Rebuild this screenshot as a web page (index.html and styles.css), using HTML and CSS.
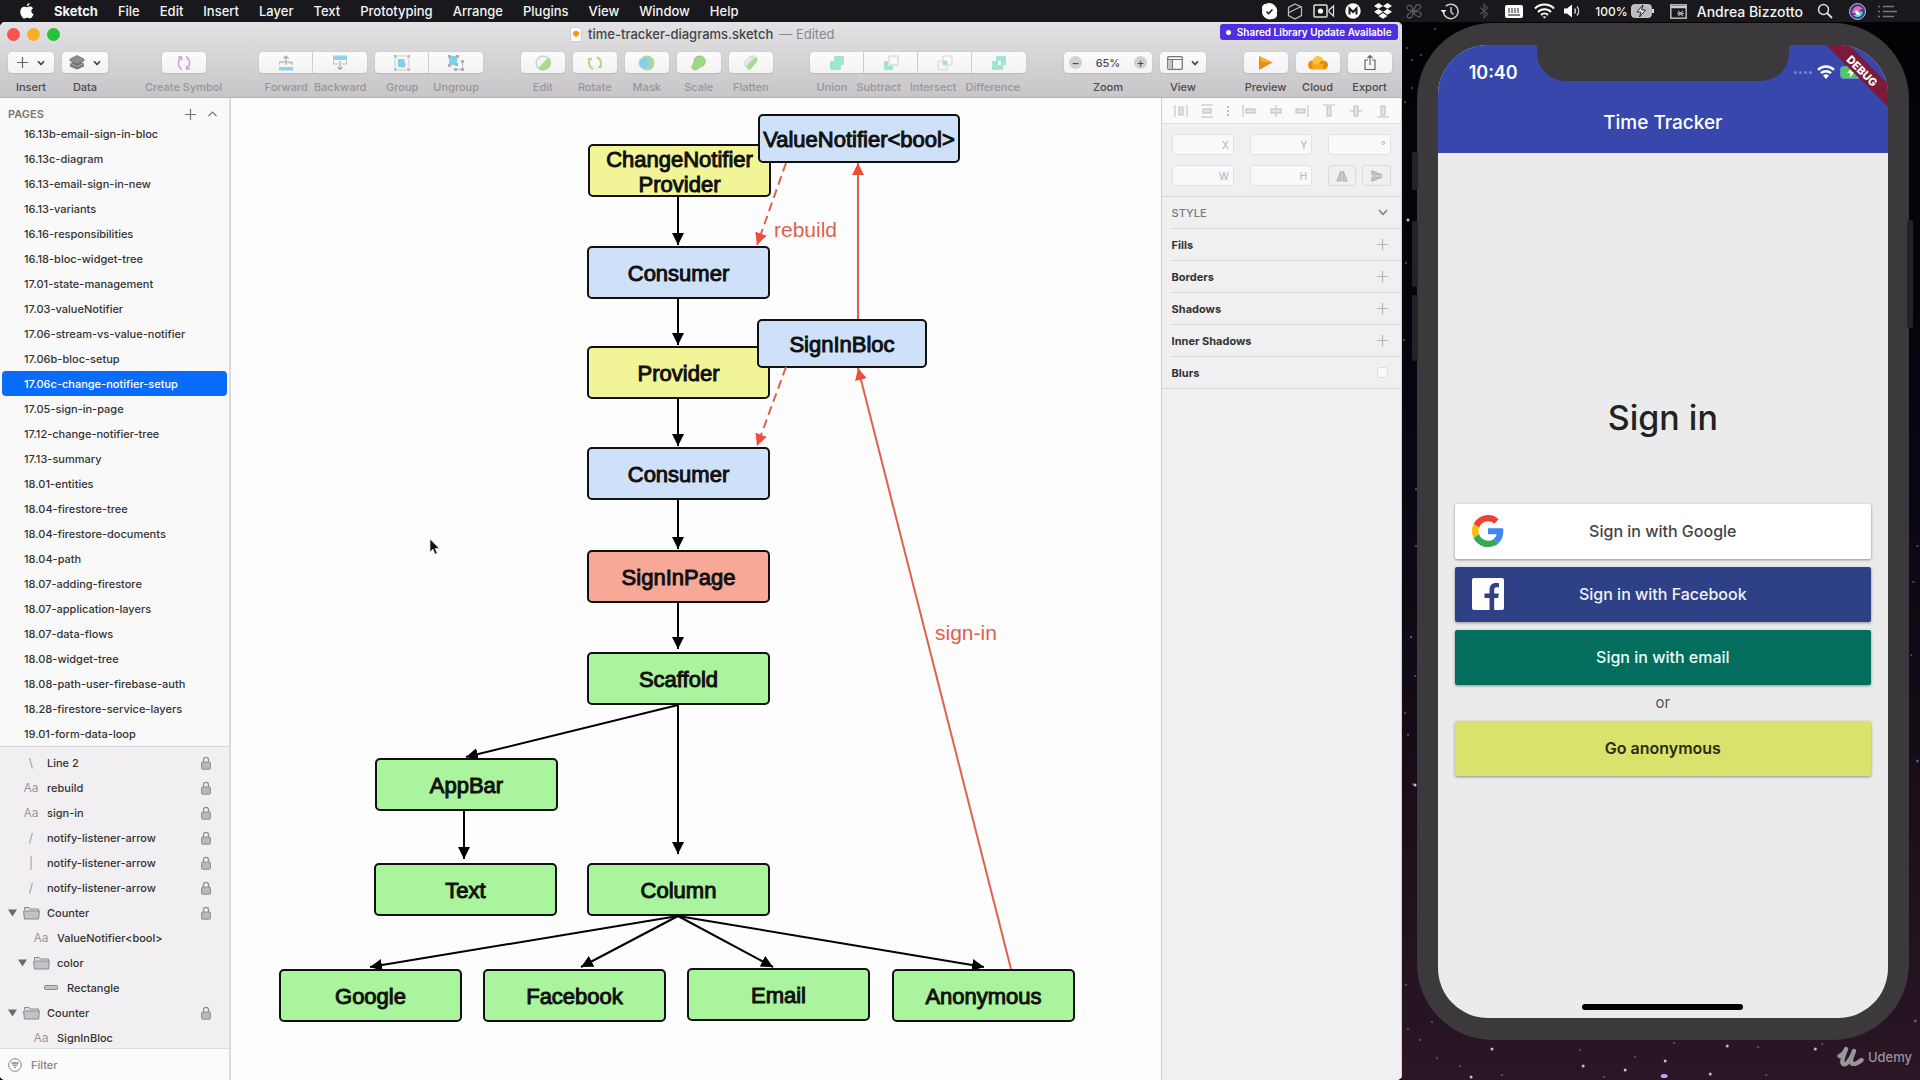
FILE: index.html
```html
<!DOCTYPE html>
<html lang="en">
<head>
<meta charset="utf-8">
<title>time-tracker-diagrams.sketch</title>
<link rel="stylesheet" href="styles.css">
</head>
<body>
<svg class="defs" aria-hidden="true">
  <symbol id="lock" viewBox="0 0 10 14"><path d="M2.5 6V3.8a2.5 2.5 0 0 1 5 0V6" fill="none" stroke="#8d8c8f" stroke-width="1.3"/><rect x=".6" y="6" width="8.8" height="7.2" rx="1" fill="#b9b8bb" stroke="#8d8c8f"/></symbol>
  <symbol id="folder" viewBox="0 0 17 14"><path d="M1.5 4V1.5h4.500l1.200 1.500h8.300V5" fill="#dddce0" stroke="#89888c"/><path d="M.6 5h15.800l-.8 8H1.400z" fill="#c3c2c6" stroke="#89888c"/></symbol>
  <symbol id="tri" viewBox="0 0 9 8"><path d="M0 .5h9L4.500 7.500z" fill="#6b6a6d"/></symbol>
  <symbol id="chev" viewBox="0 0 8 6"><path d="M1 1.200 4 4.500 7 1.200" fill="none" stroke="#444" stroke-width="1.700"/></symbol>
  <symbol id="plus" viewBox="0 0 11 11"><path d="M5.500 0v11M0 5.500h11" fill="none" stroke="currentColor" stroke-width="1.200"/></symbol>
</svg>

<header class="menubar">
  <nav class="menus">
    <button aria-label="Apple menu"><svg width="14" height="16" viewBox="0 0 14 16"><path d="M9.600 0c.1 1.500-1.200 3.100-2.700 3.200C6.700 1.700 8.100.2 9.600 0zM7.200 4.300c.8 0 1.600-.7 2.900-.7 1 0 2.200.6 2.900 1.600-2.500 1.500-2.100 4.900.6 5.900-.6 1.700-2 4.300-3.500 4.400-1.100 0-1.500-.7-2.800-.7s-1.700.7-2.700.7C2.700 15.600.3 11.900.3 8.700c0-3.100 2-4.900 3.900-4.900 1.300 0 2.200.5 3 .5z" fill="#fff"/></svg></button>
    <button class="app">Sketch</button><button>File</button><button>Edit</button><button>Insert</button><button>Layer</button><button>Text</button><button>Prototyping</button><button>Arrange</button><button>Plugins</button><button>View</button><button>Window</button><button>Help</button>
  </nav>
  <div class="status">
    <span class="slot s24"><svg width="17" height="17" viewBox="0 0 17 17"><path d="M5 .8a8 8 0 0 1 10.800 9.700A4.300 4.300 0 0 1 11 16 7.600 7.600 0 0 1 1.300 6.800 4.300 4.300 0 0 1 5 .8z" fill="#fff"/><path d="m5.500 8.500 2 2 4-4" fill="none" stroke="#222" stroke-width="1.600"/></svg></span>
    <span class="slot s28"><svg width="16" height="17" viewBox="0 0 16 17"><path d="m8 1 6.500 3v8.500L8 16l-6.500-3.500V4.500zM2 9.500l12-6" fill="none" stroke="#bbb" stroke-width="1.300"/></svg></span>
    <span class="slot"><svg width="22" height="14" viewBox="0 0 22 14"><rect x="1" y="1" width="13" height="12" rx="1" fill="none" stroke="#ddd" stroke-width="1.500"/><circle cx="7.500" cy="7" r="2.600" fill="#fff"/><path d="m16 6 4.500-4v10L16 8z" fill="none" stroke="#ddd" stroke-width="1.300"/></svg></span>
    <span class="slot s28"><svg width="16" height="16" viewBox="0 0 16 16"><circle cx="8" cy="8" r="7.700" fill="#fff"/><path d="M4.500 11.500v-6L8 9l3.500-3.500v6" fill="none" stroke="#1b1b1f" stroke-width="2"/></svg></span>
    <span class="slot s32"><svg width="18" height="16" viewBox="0 0 18 16" fill="#fff"><path d="M4.500 0 9 2.900 4.500 5.800 0 2.900zM13.500 0 18 2.900l-4.500 2.900L9 2.900zM4.500 5.900 9 8.800l-4.500 2.900L0 8.800zM13.500 5.900 18 8.800l-4.500 2.900L9 8.800zM9 10l4.500 2.900L9 15.800l-4.500-2.900z"/></svg></span>
    <span class="slot"><svg width="18" height="16" viewBox="0 0 18 16" fill="none" stroke="#59595e" stroke-width="1.300"><path d="M8 8C3 8 1 6 2.500 3.500S7 2 8 8zM9 8c0-5 3-7 5.500-6S16 7 9 8zM8 9c5-1 9 0 8 3s-5 2-8-3zM8 8.500c0 4-1.500 6.500-4 6.500S1 11 8 8.500z"/></svg></span>
    <span class="slot s40"><svg width="19" height="17" viewBox="0 0 19 17" fill="none" stroke="#ccc" stroke-width="1.500"><path d="M3.500 9A7.300 7.300 0 1 0 5.700 3.200M11 4v5l2.500 2.500"/><path d="m.5 7 3 3 3-3z" fill="#fff" stroke="none"/></svg></span>
    <span class="slot"><svg width="10" height="16" viewBox="0 0 10 16"><path d="m1 4.500 7.500 6.500L5 14.500v-13L8.500 5 1 11.500" fill="none" stroke="#4c4c51" stroke-width="1.300"/></svg></span>
    <span class="slot"><svg width="20" height="15" viewBox="0 0 20 15"><rect x="1" y="1" width="18" height="13" rx="2" fill="#fff"/><path d="M5 4v5M8 4v5M11 4v5M14 4v5M4 11h12" stroke="#555" stroke-width="1.300"/></svg></span>
    <span class="slot"><svg width="21" height="16" viewBox="0 0 21 16" fill="none" stroke="#fff" stroke-width="2"><path d="M1 5.500a13.500 13.500 0 0 1 19 0M4 9a9 9 0 0 1 13 0M7 12a5 5 0 0 1 7 0"/><path d="m8.500 13.500 2 2 2-2z" fill="#fff" stroke="none"/></svg></span>
    <span class="slot s28"><svg width="18" height="14" viewBox="0 0 18 14"><path d="M0 4.500h3L8 .5v13l-5-4H0z" fill="#fff"/><path d="M10.500 4.500a4 4 0 0 1 0 5M13 2.500a7 7 0 0 1 0 9" fill="none" stroke="#ccc" stroke-width="1.400"/></svg></span>
    <span class="battery">100%<svg width="24" height="14" viewBox="0 0 24 14"><rect x=".7" y=".7" width="19.500" height="12.600" rx="2.500" fill="#bbb" stroke="#ddd"/><path d="M22 5v4" stroke="#ddd" stroke-width="2"/><path d="M12 1 6 8h4l-1.500 5 6-7h-4z" fill="#fff" stroke="#222"/></svg></span>
    <span class="slot s32"><svg width="17" height="15" viewBox="0 0 17 15"><rect x=".8" y=".8" width="15.400" height="13.400" fill="none" stroke="#bbb" stroke-width="1.500"/><path d="M1 3h15" stroke="#ccc" stroke-width="2.500"/><path d="m8 7 5 5M13 7l-5 5M7 9.500h7" stroke="#aaa" stroke-width="1.200"/></svg></span>
    <span class="user">Andrea Bizzotto</span>
    <span class="slot s32"><svg width="16" height="16" viewBox="0 0 16 16" fill="none" stroke="#ddd"><circle cx="6.500" cy="6.500" r="5" stroke-width="1.500"/><path d="m10 10 5 5" stroke-width="2"/></svg></span>
    <span class="slot s32"><svg width="17" height="17" viewBox="0 0 17 17"><circle cx="8.500" cy="8.500" r="8" fill="#3c3f8e" stroke="#bfc3cc"/><path d="M3 10C4 3 10 1 14 6c-5 0-4 6-11 4z" fill="#ef6aa8"/><path d="M4 12c4 1 5-6 10-3-1 5-6 7-10 3z" fill="#52cfe8"/><path d="M6 8c3-2 4 2 5 4-2 1-4 0-5-4z" fill="#fff"/></svg></span>
    <span class="slot s28"><svg width="19" height="13" viewBox="0 0 19 13" stroke="#77777c" stroke-width="1.500"><path d="M0 1.500h2M5 1.500h11M0 6.500h2M5 6.500h14M0 11.500h2M5 11.500h11"/></svg></span>
  </div>
</header>

<main class="desk">
  <section class="window">
    <div class="chrome">
      <div class="titlebar">
        <div class="lights"><i class="red"></i><i class="amber"></i><i class="green"></i></div>
        <p class="title"><svg width="12" height="15" viewBox="0 0 12 15"><path d="M.5.500h8l3 3v11H.5z" fill="#fff" stroke="#ccc"/><path d="m3 5.500 1.500-1.500h3L9 5.500v2L6 10.500 3 7.500z" fill="#f39a12"/></svg><b>time-tracker-diagrams.sketch</b> — Edited</p>
        <button class="notice">Shared Library Update Available</button>
      </div>
      <div class="toolbar">
        <div class="set">
          <div class="tool on w46"><button id="t1"><svg width="11" height="11" color="#666"><use href="#plus"/></svg><svg width="8" height="6"><use href="#chev"/></svg></button><label for="t1">Insert</label></div>
          <div class="tool on w46"><button id="t2"><svg width="16" height="15" viewBox="0 0 16 15"><path d="m8 5.500 7 3v3L8 14.500l-7-3v-3z" fill="#777"/><path d="m8 .500 7 3.500v2L8 9 1 6V4z" fill="#8c8c8c" stroke="#666" stroke-width=".6"/><path d="m1 8.500 7 3 7-3" fill="none" stroke="#bbb" stroke-width=".7"/></svg><svg width="8" height="6"><use href="#chev"/></svg></button><label for="t2">Data</label></div>
        </div>
        <div class="tool w76"><button id="t3"><svg width="16" height="16" viewBox="0 0 16 16" fill="none" stroke="#d3a0de" stroke-width="1.500"><path d="M6 14.500C1.500 12 1.500 5 5 2.500M2 2h3.500v3.500M10 1.500C14.500 4 14.500 11 11 13.500M14 14h-3.500v-3.500"/></svg></button><label for="t3">Create Symbol</label></div>
        <div class="set">
          <div class="segs">
            <div class="tool seg"><button id="t4"><svg width="16" height="16" viewBox="0 0 16 16"><path d="M1.500 9.500V7h4.500M10 7h4.500v2.500zH1.500" fill="none" stroke="#b8b8b8"/><path d="M8 10V1M5.500 3.500 8 1l2.500 2.500" fill="none" stroke="#aaa" stroke-width="1.200"/><path d="M1 12h14v3.500H1z" fill="#93d0ea"/></svg></button><label for="t4">Forward</label></div>
            <div class="tool seg"><button id="t5"><svg width="16" height="16" viewBox="0 0 16 16"><path d="M1 .500h14V5H1z" fill="#93d0ea"/><path d="M1.500 6v3h4.500M10 9h4.500V6" fill="none" stroke="#b8b8b8"/><path d="M8 6v8M5.500 12 8 14.500l2.500-2.500" fill="none" stroke="#aaa" stroke-width="1.200"/></svg></button><label for="t5">Backward</label></div>
          </div>
          <div class="segs">
            <div class="tool seg"><button id="t6"><svg width="18" height="18" viewBox="0 0 18 18"><path d="M5 2h8M5 16h8M2 5v8M16 5v8" stroke="#ccc"/><path d="M5 5h6.500v8H5z" fill="#7fcdf0"/><path d="M12 8.500v4.500H8" stroke="#bbb" fill="none"/><path d="M1 1h3v3H1zM14 1h3v3h-3zM1 14h3v3H1zM14 14h3v3h-3z" fill="#c0c0c0"/></svg></button><label for="t6">Group</label></div>
            <div class="tool seg"><button id="t7"><svg width="18" height="18" viewBox="0 0 18 18"><path d="M2 2h8v9H2z" fill="#7fcdf0"/><path d="M1 1h3v3H1zM9 1h3v3H9zM1 10h3v3H1zM8 9h3v3H8zM14 6h3v3h-3zM7 14h3v3H7zM14 14h3v3h-3z" fill="#b0b0b0"/><path d="M15.500 9v5M10 15.500h4" stroke="#bbb"/></svg></button><label for="t7">Ungroup</label></div>
          </div>
        </div>
        <div class="set">
          <div class="tool w44"><button id="t8"><svg width="16" height="16" viewBox="0 0 16 16"><circle cx="8" cy="8" r="7" fill="#f4f4f4" stroke="#bbb"/><path d="M13.500 2A7.500 7.500 0 0 1 3 13.500z" fill="#aadb91"/></svg></button><label for="t8">Edit</label></div>
          <div class="tool w44"><button id="t9"><svg width="16" height="16" viewBox="0 0 16 16" fill="none" stroke="#aadb91" stroke-width="2"><path d="M6 14C1 11.500 1 6 3.500 3M10 2c5 2.500 5 8 2.500 11M1 4h4M15 12h-4"/></svg></button><label for="t9">Rotate</label></div>
          <div class="tool w44"><button id="t10"><svg width="17" height="16" viewBox="0 0 17 16"><circle cx="9" cy="8" r="7.500" fill="#aadb91"/><circle cx="6.500" cy="8" r="5.500" fill="#84d0ee" stroke="#bcc"/></svg></button><label for="t10">Mask</label></div>
          <div class="tool w44"><button id="t11"><svg width="16" height="16" viewBox="0 0 16 16"><path d="M9 1a5.500 5.500 0 0 1 4 9c-2 2-4 1-6 4-2 2-6 1-6-2 0-2 2-3 2-6a6 6 0 0 1 6-5z" fill="#9fd987" stroke="#92cf78"/></svg></button><label for="t11">Scale</label></div>
          <div class="tool w44"><button id="t12"><svg width="16" height="16" viewBox="0 0 16 16"><path d="M2 10c-1-4 5-10 9-9L3 12z" fill="#eee" stroke="#ccc"/><path d="m4 11 8-9c2 0 3 2 2.500 4L8 14c-2 2-5 0-4-3z" fill="#aadb91"/></svg></button><label for="t12">Flatten</label></div>
        </div>
        <div class="packed">
          <div class="segs">
            <div class="tool seg"><button id="t13"><svg width="16" height="16" viewBox="0 0 16 16"><path d="M5 2q0-1 1-1h8q1 0 1 1v7q0 1-1 1h-2v4q0 1-1 1H2q-1 0-1-1V7q0-1 1-1h3z" fill="#a0e4d4"/></svg></button></div>
            <div class="tool seg"><button id="t14"><svg width="16" height="16" viewBox="0 0 16 16"><rect x="6" y="1" width="9" height="9" rx="1" fill="none" stroke="#ccc"/><path d="M2 6h3v5h5v3q0 1-1 1H2q-1 0-1-1V7q0-1 1-1z" fill="#a0e4d4"/></svg></button></div>
            <div class="tool seg"><button id="t15"><svg width="16" height="16" viewBox="0 0 16 16"><g fill="none" stroke="#d5d5d5"><rect x="6" y="1" width="9" height="9" rx="1"/><rect x="1" y="6" width="9" height="9" rx="1"/></g><path d="M6 6h4v4H6z" fill="#9edfce"/></svg></button></div>
            <div class="tool seg"><button id="t16"><svg width="16" height="16" viewBox="0 0 16 16"><path d="M5 2q0-1 1-1h8q1 0 1 1v7q0 1-1 1h-2v4q0 1-1 1H2q-1 0-1-1V7q0-1 1-1h3z" fill="#a0e4d4"/><path d="M7 6h3v4H7z" fill="#f8fffd"/></svg></button></div>
          </div>
          <div class="captions"><label for="t13">Union</label><label for="t14">Subtract</label><label for="t15">Intersect</label><label for="t16">Difference</label></div>
        </div>
        <div class="set">
          <div class="tool on w88"><div class="stepper"><button aria-label="Zoom out">−</button><span>65%</span><button aria-label="Zoom in">+</button></div><span class="cap">Zoom</span></div>
          <div class="tool on w46"><button id="t17"><svg width="16" height="14" viewBox="0 0 16 14" fill="none" stroke="#777"><rect x=".7" y=".7" width="14.600" height="12.600" rx="1" stroke-width="1.300"/><path d="M1 3.500h14M5.500 3.500V13" /><path d="M1.500 4h3.500v9H1.500z" fill="#c5c5c5" stroke="none"/></svg><svg width="8" height="6"><use href="#chev"/></svg></button><label for="t17">View</label></div>
        </div>
        <div class="set">
          <div class="tool on w44"><button id="t18"><svg width="15" height="14" viewBox="0 0 15 14"><path d="m1 0 13.500 6.500L1 14z" fill="#ed8b18"/><path d="m1 0 13.500 6.500L4 6z" fill="#f9ad33"/></svg></button><label for="t18">Preview</label></div>
          <div class="tool on w44"><button id="t19"><svg width="20" height="14" viewBox="0 0 20 14"><circle cx="4.500" cy="9" r="4.500" fill="#e98a10"/><circle cx="10" cy="5.500" r="5.500" fill="#fbc43b"/><circle cx="15.500" cy="9" r="4.500" fill="#e98a10"/><path d="M4.500 8h11v5.500h-11z" fill="#f5a91e"/></svg></button><label for="t19">Cloud</label></div>
          <div class="tool on w44"><button id="t20"><svg width="12" height="17" viewBox="0 0 12 17" fill="none" stroke="#666" stroke-width="1.200"><path d="M4 6H1v9.500h10V6H8M6 11V1.500M3.500 4 6 1.500 8.500 4"/></svg></button><label for="t20">Export</label></div>
        </div>
      </div>
    </div>

    <div class="work">
      <aside class="sidebar">
        <div class="pages-head"><h2>PAGES</h2><button aria-label="Add page"><svg width="11" height="11"><use href="#plus"/></svg></button><button aria-label="Collapse pages"><svg width="9" height="6" viewBox="0 0 9 6"><path d="m.5 5 4-4 4 4" fill="none" stroke="#777" stroke-width="1.200"/></svg></button></div>
        <ul class="pages">
          <li><button>16.13b-email-sign-in-bloc</button></li><li><button>16.13c-diagram</button></li><li><button>16.13-email-sign-in-new</button></li><li><button>16.13-variants</button></li><li><button>16.16-responsibilities</button></li><li><button>16.18-bloc-widget-tree</button></li><li><button>17.01-state-management</button></li><li><button>17.03-valueNotifier</button></li><li><button>17.06-stream-vs-value-notifier</button></li><li><button>17.06b-bloc-setup</button></li><li class="current"><button>17.06c-change-notifier-setup</button></li><li><button>17.05-sign-in-page</button></li><li><button>17.12-change-notifier-tree</button></li><li><button>17.13-summary</button></li><li><button>18.01-entities</button></li><li><button>18.04-firestore-tree</button></li><li><button>18.04-firestore-documents</button></li><li><button>18.04-path</button></li><li><button>18.07-adding-firestore</button></li><li><button>18.07-application-layers</button></li><li><button>18.07-data-flows</button></li><li><button>18.08-widget-tree</button></li><li><button>18.08-path-user-firebase-auth</button></li><li><button>18.28-firestore-service-layers</button></li><li><button>19.01-form-data-loop</button></li>
        </ul>
        <ul class="layers">
          <li><i></i><span class="kind">\</span><span>Line 2</span><svg class="lock"><use href="#lock"/></svg></li>
          <li><i></i><span class="kind">Aa</span><span>rebuild</span><svg class="lock"><use href="#lock"/></svg></li>
          <li><i></i><span class="kind">Aa</span><span>sign-in</span><svg class="lock"><use href="#lock"/></svg></li>
          <li><i></i><span class="kind">/</span><span>notify-listener-arrow</span><svg class="lock"><use href="#lock"/></svg></li>
          <li><i></i><span class="kind">|</span><span>notify-listener-arrow</span><svg class="lock"><use href="#lock"/></svg></li>
          <li><i></i><span class="kind">/</span><span>notify-listener-arrow</span><svg class="lock"><use href="#lock"/></svg></li>
          <li><i><svg width="9" height="8"><use href="#tri"/></svg></i><span class="kind"><svg width="17" height="14"><use href="#folder"/></svg></span><span>Counter</span><svg class="lock"><use href="#lock"/></svg></li>
          <li class="in1"><i></i><span class="kind">Aa</span><span>ValueNotifier&lt;bool&gt;</span></li>
          <li class="in1"><i><svg width="9" height="8"><use href="#tri"/></svg></i><span class="kind"><svg width="17" height="14"><use href="#folder"/></svg></span><span>color</span></li>
          <li class="in2"><i></i><span class="kind"><svg width="14" height="5"><rect x=".5" y=".5" width="13" height="4" rx="1" fill="#c3c2c6" stroke="#89888c"/></svg></span><span>Rectangle</span></li>
          <li><i><svg width="9" height="8"><use href="#tri"/></svg></i><span class="kind"><svg width="17" height="14"><use href="#folder"/></svg></span><span>Counter</span><svg class="lock"><use href="#lock"/></svg></li>
          <li class="in1"><i></i><span class="kind">Aa</span><span>SignInBloc</span></li>
        </ul>
        <label class="filter"><svg width="14" height="14" viewBox="0 0 14 14" fill="none" stroke="#858488"><circle cx="7" cy="7" r="6.300"/><path d="M3.500 5h7M4.500 7.200h5M6 9.400h2" stroke-width="1.300"/></svg><input type="text" placeholder="Filter" aria-label="Filter layers"></label>
      </aside>

      <div class="canvas">
        <div class="board">
          <div class="node yellow n-cnp">ChangeNotifier<br>Provider</div>
          <div class="node blue n-con1">Consumer</div>
          <div class="node yellow n-prov">Provider</div>
          <div class="node blue n-con2">Consumer</div>
          <div class="node coral n-page">SignInPage</div>
          <div class="node green n-scaf">Scaffold</div>
          <div class="node green n-bar">AppBar</div>
          <div class="node green n-text">Text</div>
          <div class="node green n-col">Column</div>
          <div class="node green n-goo">Google</div>
          <div class="node green n-fb">Facebook</div>
          <div class="node green n-mail">Email</div>
          <div class="node green n-anon">Anonymous</div>
          <div class="node blue n-value">ValueNotifier&lt;bool&gt;</div>
          <div class="node blue n-bloc">SignInBloc</div>
          <svg class="wires" viewBox="231 98 930 982">
            <defs>
              <marker id="ab" viewBox="0 0 12 12" refX="12" refY="6" markerWidth="12" markerHeight="12" markerUnits="userSpaceOnUse" orient="auto"><path d="M0 0 12 6 0 12z"/></marker>
              <marker id="ar" viewBox="0 0 12 12" refX="12" refY="6" markerWidth="12" markerHeight="12" markerUnits="userSpaceOnUse" orient="auto"><path d="M0 0 12 6 0 12z" fill="#e8503c"/></marker>
            </defs>
            <g stroke="#000" stroke-width="2" fill="none">
              <path d="M678 197V245" marker-end="url(#ab)"/><path d="M678 298V345" marker-end="url(#ab)"/><path d="M678 398V446" marker-end="url(#ab)"/><path d="M678 499V549" marker-end="url(#ab)"/><path d="M678 602V649" marker-end="url(#ab)"/>
              <path d="M678 705 466 757" marker-end="url(#ab)"/><path d="M678 705V854" marker-end="url(#ab)"/><path d="M464 811V859" marker-end="url(#ab)"/>
              <path d="M678 916 370 967" marker-end="url(#ab)"/><path d="M678 916 581 967" marker-end="url(#ab)"/><path d="M678 916 773 967" marker-end="url(#ab)"/><path d="M678 916 984 967" marker-end="url(#ab)"/>
            </g>
            <g stroke="#e0604e" stroke-width="2" fill="none">
              <path d="M858 319V163" marker-end="url(#ar)"/><path d="M1011 969 858 368" marker-end="url(#ar)"/>
              <path d="M786 163 757 245" stroke-dasharray="9 5" marker-end="url(#ar)"/><path d="M786 367 757 446" stroke-dasharray="9 5" marker-end="url(#ar)"/>
            </g>
          </svg>
          <span class="note note-rebuild">rebuild</span>
          <span class="note note-sign">sign-in</span>
          <svg class="cursor" width="11" height="18" viewBox="0 0 11 18"><path d="M1 1v13l3-2.800 2 5 2.200-.9-2-4.800h4z" fill="#111" stroke="#ddd" stroke-width=".8"/></svg>
        </div>
      </div>

      <aside class="inspector">
        <div class="aligns">
          <svg viewBox="0 0 14 14"><path d="M1 1v12M13 1v12"/><rect x="5" y="3" width="4" height="8"/></svg>
          <svg viewBox="0 0 14 14"><path d="M1 1h12M1 13h12"/><rect x="3" y="5" width="8" height="4"/></svg>
          <svg class="divider" viewBox="6 0 2 14"><path d="M7 2v11" stroke-width="2" stroke-dasharray="2 2"/></svg>
          <svg viewBox="0 0 14 14"><path d="M1 1v12"/><rect x="4" y="5" width="9" height="4"/></svg>
          <svg viewBox="0 0 14 14"><path d="M7 1v12"/><rect x="2" y="5" width="10" height="4"/></svg>
          <svg viewBox="0 0 14 14"><path d="M13 1v12"/><rect x="1" y="5" width="9" height="4"/></svg>
          <svg viewBox="0 0 14 14"><path d="M1 1h12"/><rect x="5" y="3" width="4" height="9"/></svg>
          <svg viewBox="0 0 14 14"><path d="M1 7h12"/><rect x="5" y="2" width="4" height="10"/></svg>
          <svg viewBox="0 0 14 14"><path d="M1 13h12"/><rect x="5" y="2" width="4" height="9"/></svg>
        </div>
        <div class="fields">
          <label><input type="text">X</label><label><input type="text">Y</label><label><input type="text">°</label>
          <label><input type="text">W</label><label><input type="text">H</label>
          <div class="flips"><button aria-label="Flip horizontally"><svg width="12" height="12" viewBox="0 0 12 12" fill="#ccc" stroke="#aaa"><path d="M5 1v10H.8zM7 1v10h4.200z"/></svg></button><button aria-label="Flip vertically"><svg width="12" height="12" viewBox="0 0 12 12" fill="#ccc" stroke="#aaa"><path d="M1 .8V5h10zM1 11.200V7h10z"/></svg></button></div>
        </div>
        <h2 class="style-head">STYLE<svg width="10" height="7" viewBox="0 0 10 7"><path d="m1 1 4 4.500L9 1" fill="none" stroke="#777" stroke-width="1.300"/></svg></h2>
        <ul class="style-rows">
          <li>Fills<button aria-label="Add fill"><svg width="11" height="11"><use href="#plus"/></svg></button></li>
          <li>Borders<button aria-label="Add border"><svg width="11" height="11"><use href="#plus"/></svg></button></li>
          <li>Shadows<button aria-label="Add shadow"><svg width="11" height="11"><use href="#plus"/></svg></button></li>
          <li>Inner Shadows<button aria-label="Add inner shadow"><svg width="11" height="11"><use href="#plus"/></svg></button></li>
          <li><label for="blur">Blurs</label><input type="checkbox" id="blur"></li>
        </ul>
      </aside>
    </div>
  </section>

  <section class="stage">
    <svg class="stars" viewBox="1402 22 518 1058" preserveAspectRatio="none" fill="#8d87b5">
      <g opacity=".6"><circle cx="1407" cy="48" r="1"/><circle cx="1412" cy="60" r="1"/><circle cx="1435" cy="29" r="1"/><circle cx="1421" cy="55" r="1"/><circle cx="1412" cy="88" r="1"/><circle cx="1405" cy="102" r="1"/><circle cx="1406" cy="263" r="1"/><circle cx="1404" cy="340" r="1"/><circle cx="1416" cy="489" r="1"/><circle cx="1416" cy="546" r="1"/><circle cx="1411" cy="637" r="1.200"/><circle cx="1415" cy="676" r="1"/><circle cx="1405" cy="713" r="1"/><circle cx="1408" cy="735" r="1"/><circle cx="1413" cy="784" r="1"/><circle cx="1406" cy="985" r="1"/><circle cx="1917" cy="546" r="1"/><circle cx="1913" cy="582" r="1"/><circle cx="1911" cy="655" r="1"/><circle cx="1915" cy="1021" r="1.500"/><circle cx="1917" cy="761" r="1.500"/><circle cx="1432" cy="1022" r="1"/><circle cx="1408" cy="1029" r="1"/><circle cx="1420" cy="1040" r="1"/><circle cx="1437" cy="1058" r="1"/><circle cx="1460" cy="1066" r="1"/><circle cx="1502" cy="1075" r="1"/><circle cx="1580" cy="1050" r="1"/><circle cx="1604" cy="1077" r="1"/><circle cx="1635" cy="1057" r="1"/><circle cx="1674" cy="1043" r="1"/><circle cx="1758" cy="1047" r="1"/><circle cx="1766" cy="1075" r="1"/><circle cx="1822" cy="1044" r="1"/></g>
      <g fill="#c3bce0"><circle cx="1408" cy="220" r="1.500"/><circle cx="1492" cy="1049" r="1.500"/><circle cx="1583" cy="1066" r="1.500"/><circle cx="1625" cy="1070" r="1.500"/><circle cx="1665" cy="1061" r="1.500"/><circle cx="1727" cy="1046" r="1.500"/><circle cx="1710" cy="1074" r="1.500"/><circle cx="1815" cy="1049" r="1.500"/><circle cx="1471" cy="1077" r="1.500"/><circle cx="1415" cy="785" r="1.500"/></g>
      <ellipse cx="1664" cy="1076" rx="3.500" ry="2" fill="#b9a6ff"/>
    </svg>
    <div class="phone">
      <i class="key key-mute"></i><i class="key key-up"></i><i class="key key-down"></i><i class="key key-power"></i>
      <div class="screen">
        <div class="appbar">
          <div class="ios-status"><time>10:40</time><div class="notch"></div>
            <div class="signals"><span class="dots"><i></i><i></i><i></i><i></i></span><svg width="18" height="14" viewBox="0 0 18 14" fill="none" stroke="#fff" stroke-width="2.400"><path d="M1 4.800a11.500 11.500 0 0 1 16 0M4 8.200a7.200 7.200 0 0 1 10 0"/><path d="M6 10.500a4.500 4.500 0 0 1 6 0L9 14z" fill="#fff" stroke="none"/></svg><svg width="25" height="13" viewBox="0 0 25 13"><rect x=".5" y=".5" width="21" height="12" rx="3" fill="#3fd158" stroke="#7c86c8"/><path d="M12.500 1 7 7.300h3.500L9.500 12 15 5.800h-3.500z" fill="#fff"/></svg></div>
          </div>
          <h1>Time Tracker</h1>
          <svg class="ribbon" width="66" height="66" viewBox="0 0 66 66"><path d="M4 0h23l39 39v23z" fill="#7b1a3a"/><text x="40" y="30" transform="rotate(45 40 26)" text-anchor="middle">DEBUG</text></svg>
        </div>
        <div class="signin">
          <h2>Sign in</h2>
          <button class="cta google"><svg width="32" height="32" viewBox="0 0 48 48"><path fill="#EA4335" d="M24 9.500c3.540 0 6.710 1.220 9.210 3.600l6.850-6.850C35.900 2.380 30.470 0 24 0 14.620 0 6.510 5.380 2.560 13.220l7.980 6.190C12.430 13.720 17.740 9.500 24 9.500z"/><path fill="#4285F4" d="M46.980 24.550c0-1.570-.15-3.090-.38-4.550H24v9.020h12.940c-.58 2.960-2.260 5.480-4.780 7.180l7.730 6c4.510-4.180 7.090-10.360 7.090-17.650z"/><path fill="#FBBC05" d="M10.530 28.590c-.48-1.450-.76-2.990-.76-4.590s.27-3.140.76-4.590l-7.980-6.190C.92 16.460 0 20.120 0 24c0 3.880.92 7.540 2.560 10.780l7.970-6.190z"/><path fill="#34A853" d="M24 48c6.480 0 11.930-2.130 15.890-5.810l-7.730-6c-2.150 1.450-4.920 2.300-8.160 2.300-6.260 0-11.570-4.220-13.470-9.910l-7.980 6.190C6.510 42.620 14.620 48 24 48z"/></svg><span>Sign in with Google</span></button>
          <button class="cta facebook"><svg width="32" height="32" viewBox="0 0 32 32"><rect width="32" height="32" rx="2" fill="#fff"/><path d="M17.500 32V20h-5v-4.500h5v-3.800C17.500 7.500 20 5 24 5c1.500 0 2.600.1 3 .2v4h-2.300c-2 0-2.500 1-2.500 2.600v3.700h4.600l-.7 4.500h-3.900v12z" fill="#2e4186"/></svg><span>Sign in with Facebook</span></button>
          <button class="cta email"><span>Sign in with email</span></button>
          <p>or</p>
          <button class="cta anon"><span>Go anonymous</span></button>
        </div>
        <div class="home"></div>
      </div>
    </div>
    <div class="brand"><svg width="27" height="22" viewBox="0 0 27 22" fill="none" stroke="#9a949b" stroke-linecap="round" stroke-linejoin="round" stroke-width="4.400"><path d="M2.500 10C5 9 7.500 6.500 9 3 7 8 4.500 14 5.500 17c1.500 4 7-1 10-8.500L17 5c-2 5-4 11-2 12.500 2 1 6-.5 9.500-3.500"/></svg>Udemy</div>
  </section>
</main>
</body>
</html>
```
FILE: styles.css
```css
* { box-sizing: border-box; }
body {
  margin: 0;
  height: 100vh;
  display: flex;
  flex-direction: column;
  overflow: hidden;
  background: #000;
  font-family: Inter, "Liberation Sans", sans-serif;
  font-size: 11px;
  color: #333;
}
button, input { font: inherit; color: inherit; border: 0; margin: 0; padding: 0; background: none; }
ul { list-style: none; margin: 0; padding: 0; }
h1, h2, p { margin: 0; }
svg { display: block; flex: none; }
.defs { position: absolute; width: 0; height: 0; }

/* menu bar */
.menubar {
  flex: none;
  height: 22px;
  display: flex;
  justify-content: space-between;
  align-items: center;
  padding: 0 19px 0 20px;
  background: #19191d;
  color: #f4f4f4;
  font-size: 13px;
  font-weight: 500;
  white-space: nowrap;
}
.menus { display: flex; align-items: center; gap: 20px; }
.menus .app { font-weight: 700; }
.status { display: flex; align-items: center; }
.slot { width: 30px; display: flex; justify-content: center; }
.s24 { width: 24px; }
.s28 { width: 28px; }
.s32 { width: 32px; }
.s40 { width: 40px; }
.battery { display: flex; align-items: center; gap: 3px; margin: 0 8px; font-size: 12px; }
.user { margin: 0 6px 0 2px; font-size: 14px; font-weight: 500; }

.desk { flex: 1; min-height: 0; display: grid; grid-template-columns: 73fr 27fr; }

/* window */
.window {
  display: flex;
  flex-direction: column;
  min-width: 0;
  min-height: 0;
  border-radius: 5px;
  overflow: hidden;
  background: #fdfdfd;
}
.chrome {
  flex: none;
  height: 76px;
  background: linear-gradient(#e2e1e3, #c7c5c8);
  border-bottom: 1px solid #b3b1b5;
}
.titlebar {
  display: grid;
  grid-template-columns: 1fr auto 1fr;
  align-items: center;
  height: 24px;
  padding: 0 4px 0 7px;
}
.lights { display: flex; gap: 7px; }
.lights i { width: 13px; height: 13px; border-radius: 50%; }
.red { background: #f9524d; }
.amber { background: #fbae27; }
.green { background: #27c138; }
.title { display: flex; align-items: center; gap: 6px; font-size: 13px; color: #8b898d; white-space: nowrap; }
.title b { font-weight: 500; color: #444; }
.notice {
  justify-self: end;
  align-self: start;
  margin-top: 2px;
  height: 16px;
  padding: 0 6px;
  border-radius: 3px;
  background: #4f2de0;
  color: #fff;
  font-size: 10px;
  font-weight: 600;
}
.notice::before { content: ""; display: inline-block; width: 5px; height: 5px; margin: 0 6px 1px 0; border-radius: 50%; background: #fff; }
.toolbar {
  display: flex;
  justify-content: space-between;
  align-items: flex-start;
  padding: 6px 10px 0 8px;
}
.set { display: flex; gap: 8px; }
.segs { display: flex; }
.tool {
  display: flex;
  flex-direction: column;
  align-items: center;
  gap: 7px;
  color: #98969a;
  font-weight: 500;
  line-height: 14px;
}
.tool.on { color: #4b4a4d; }
.tool > button, .stepper {
  width: 100%;
  height: 21px;
  display: flex;
  align-items: center;
  justify-content: space-evenly;
  border-radius: 4px;
  background: linear-gradient(#fbfbfb, #f3f3f4);
  box-shadow: 0 0 1px #8888, 0 1px 1px #aaa6;
}
.tool label, .cap { white-space: nowrap; margin: 0 -8px; }
.w44 { width: 44px; }
.w46 { width: 46px; }
.w76 { width: 76px; }
.w76 > button { width: 44px; }
.w88 { width: 88px; }
.seg { width: 54px; }
.seg > button { border-radius: 0; border-right: 1px solid #d8d8d8; }
.seg:first-child > button { border-radius: 4px 0 0 4px; }
.seg:last-child > button { border-radius: 0 4px 4px 0; border-right: 0; }
.captions { display: flex; justify-content: center; gap: 9px; margin-top: 7px; color: #98969a; font-weight: 500; line-height: 14px; }
.stepper { justify-content: space-between; padding: 0 5px; }
.stepper button { width: 13px; height: 13px; border-radius: 50%; background: #d2d1d3; font-size: 12px; line-height: 12px; }

.work { flex: 1; min-height: 0; display: grid; grid-template-columns: 231px 1fr 241px; }

/* sidebar */
.sidebar {
  display: flex;
  flex-direction: column;
  min-height: 0;
  border-right: 2px solid #dad9dc;
  background: #f9f9f9;
  font-weight: 500;
}
.pages-head { display: flex; align-items: center; gap: 12px; height: 23px; flex: none; padding: 9px 12px 0 8px; color: #777; }
.pages-head h2 { flex: 1; font-size: 11px; font-weight: 600; }
.pages { flex: none; padding: 0 2px; border-bottom: 1px solid #d4d3d6; }
.pages li { height: 25px; display: flex; border-radius: 4px; }
.pages button { flex: 1; text-align: left; padding-left: 22px; }
.pages .current { background: #0a6cfb; color: #fff; }
.layers { flex: 1; min-height: 0; overflow: hidden; padding: 3px 18px 0 8px; background: #f1eff2; }
.layers li { display: flex; align-items: center; height: 25px; }
.layers .in1 { padding-left: 10px; }
.layers .in2 { padding-left: 20px; }
.layers i { width: 10px; }
.kind { width: 26px; margin-right: 3px; display: flex; justify-content: center; color: #99989b; font-weight: 400; font-size: 12px; }
.lock { width: 10px; height: 14px; margin-left: auto; }
.filter { flex: none; display: flex; align-items: center; gap: 9px; height: 32px; padding-left: 8px; border-top: 1px solid #dddcdf; background: #fbfbfb; }
.filter input { flex: 1; min-width: 0; }
.filter input::placeholder { color: #858488; opacity: 1; }

/* canvas */
.canvas { position: relative; overflow: hidden; background: #fdfdfd; }
.board { position: absolute; inset: 0; font-family: "Liberation Sans", Arial, sans-serif; }
.node {
  position: absolute;
  width: 183px;
  height: 53px;
  display: flex;
  align-items: center;
  justify-content: center;
  padding-top: 2px;
  text-align: center;
  border: 2px solid #111;
  border-radius: 5px;
  font-size: 22px;
  -webkit-text-stroke: 1px #111;
  line-height: 25px;
  color: #111;
  white-space: nowrap;
}
.yellow { background: #f2f597; }
.blue { background: #cfe1f9; }
.coral { background: #f7a896; }
.green.node { background: #a9f49c; }
.n-cnp { left: 357px; top: 46px; }
.n-con1 { left: 356px; top: 148px; }
.n-prov { left: 356px; top: 248px; }
.n-con2 { left: 356px; top: 349px; }
.n-page { left: 356px; top: 452px; }
.n-scaf { left: 356px; top: 554px; }
.n-bar { left: 144px; top: 660px; }
.n-text { left: 143px; top: 765px; }
.n-col { left: 356px; top: 765px; }
.n-goo { left: 48px; top: 871px; }
.n-fb { left: 252px; top: 871px; }
.n-mail { left: 456px; top: 870px; }
.n-anon { left: 661px; top: 871px; }
.n-value { left: 527px; top: 16px; width: 202px; height: 49px; }
.n-bloc { left: 526px; top: 221px; width: 170px; height: 49px; }
.wires { position: absolute; left: 0; top: 0; width: 930px; height: 982px; }
.note { position: absolute; font-size: 21px; line-height: 24px; color: #e0604e; }
.note-rebuild { left: 543px; top: 120px; }
.note-sign { left: 704px; top: 523px; }
.cursor { position: absolute; left: 198px; top: 440px; }

/* inspector */
.inspector { border-left: 1px solid #d0cfd2; border-right: 1px solid #d0cfd2; background: #f0eff2; }
.aligns { display: flex; justify-content: space-between; align-items: center; height: 26px; padding: 0 11px 0 12px; background: #fafafa; border-bottom: 1px solid #dddcdf; }
.aligns svg { width: 14px; height: 14px; fill: none; stroke: #bdbcbf; stroke-width: 1; }
.aligns .divider { width: 2px; }
.aligns rect { fill: #e4e4e6; }
.fields { display: grid; grid-template-columns: repeat(3, minmax(0, 1fr)); gap: 10px 16px; padding: 10px; border-bottom: 1px solid #d6d5d8; }
.fields label { display: flex; align-items: center; height: 21px; padding: 0 4px; border: 1px solid #e2e1e4; border-radius: 3px; background: #f9f8fa; color: #b3b2b5; font-size: 10px; }
.fields input { flex: 1; width: 100%; min-width: 0; }
.flips { display: flex; gap: 6px; }
.flips button { flex: 1; display: flex; align-items: center; justify-content: center; border: 1px solid #dcdbde; border-radius: 3px; }
.style-head { display: flex; justify-content: space-between; align-items: center; height: 31px; padding: 0 13px 0 10px; font-size: 11px; font-weight: 500; color: #777; }
.style-rows { border-bottom: 1px solid #d6d5d8; font-weight: 700; }
.style-rows li { display: flex; justify-content: space-between; align-items: center; height: 32px; margin-left: 10px; padding-right: 13px; border-top: 1px solid #d6d5d8; }
.style-rows button { color: #b5b4b7; }
.style-rows input { appearance: none; width: 11px; height: 11px; border: 1px solid #dddcdf; border-radius: 3px; background: #fafafa; }

/* desktop with the simulator */
.stage { position: relative; display: flex; padding: 1px 11px 40px 15px; background: linear-gradient(#020205 0%, #06050f 35%, #140b17 65%, #2b1625 100%); }
.stars { position: absolute; inset: 0; width: 100%; height: 100%; }
.phone { position: relative; flex: 1; padding: 22px 21px; border-radius: 76px; background: #3b393b; display: flex; }
.key { position: absolute; width: 6px; background: #242326; border-radius: 2px; }
.key-mute { left: -5px; top: 129px; height: 38px; }
.key-up { left: -5px; top: 198px; height: 66px; }
.key-down { left: -5px; top: 272px; height: 66px; }
.key-power { right: -4px; top: 197px; height: 108px; }
.screen { flex: 1; display: flex; flex-direction: column; border-radius: 50px; overflow: hidden; background: #ebebeb; }
.appbar { position: relative; flex: none; height: 108px; background: #3747ab; color: #fff; }
.ios-status { display: grid; grid-template-columns: 1fr 252px 1fr; height: 54px; }
.ios-status time { align-self: center; justify-self: center; font-size: 18px; font-weight: 600; padding-left: 12px; }
.notch { height: 36px; background: #3b393b; border-radius: 0 0 28px 28px; }
.signals { display: flex; align-items: center; gap: 5px; padding-left: 5px; }
.dots { display: flex; gap: 2px; }
.dots i { width: 3px; height: 3px; border-radius: 50%; background: #7a85cc; }
.appbar h1 { text-align: center; font-size: 19px; font-weight: 500; line-height: 48px; }
.ribbon { position: absolute; right: 0; top: 0; }
.ribbon text { fill: #fff; font-size: 11px; font-weight: 800; }
.signin { flex: 1; display: flex; flex-direction: column; padding: 0 17px; }
.signin h2 { padding: 240px 0 61px; text-align: center; font-size: 34px; font-weight: 500; line-height: 50px; color: #222; }
.cta { position: relative; display: flex; align-items: center; justify-content: center; height: 55px; margin-bottom: 8px; padding-bottom: 2px; border-radius: 2px; box-shadow: 0 1px 3px #0006; font-size: 16px; font-weight: 500; }
.cta svg { position: absolute; left: 17px; }
.google { background: #fff; color: #444; }
.facebook { background: #2e4186; color: #f0f1fa; }
.email { background: #036d5e; color: #e8fffa; }
.anon { background: #d9e26b; color: #2a2c12; font-weight: 600; }
.signin p { margin-top: -2px; text-align: center; font-size: 15px; line-height: 24px; margin-bottom: 6px; color: #555; }
.home { align-self: center; width: 161px; height: 6px; margin-bottom: 8px; border-radius: 3px; background: #000; }
.brand { position: absolute; right: 8px; bottom: 12px; display: flex; align-items: center; gap: 4px; font-size: 13px; font-weight: 500; color: #9a949b; }
```
